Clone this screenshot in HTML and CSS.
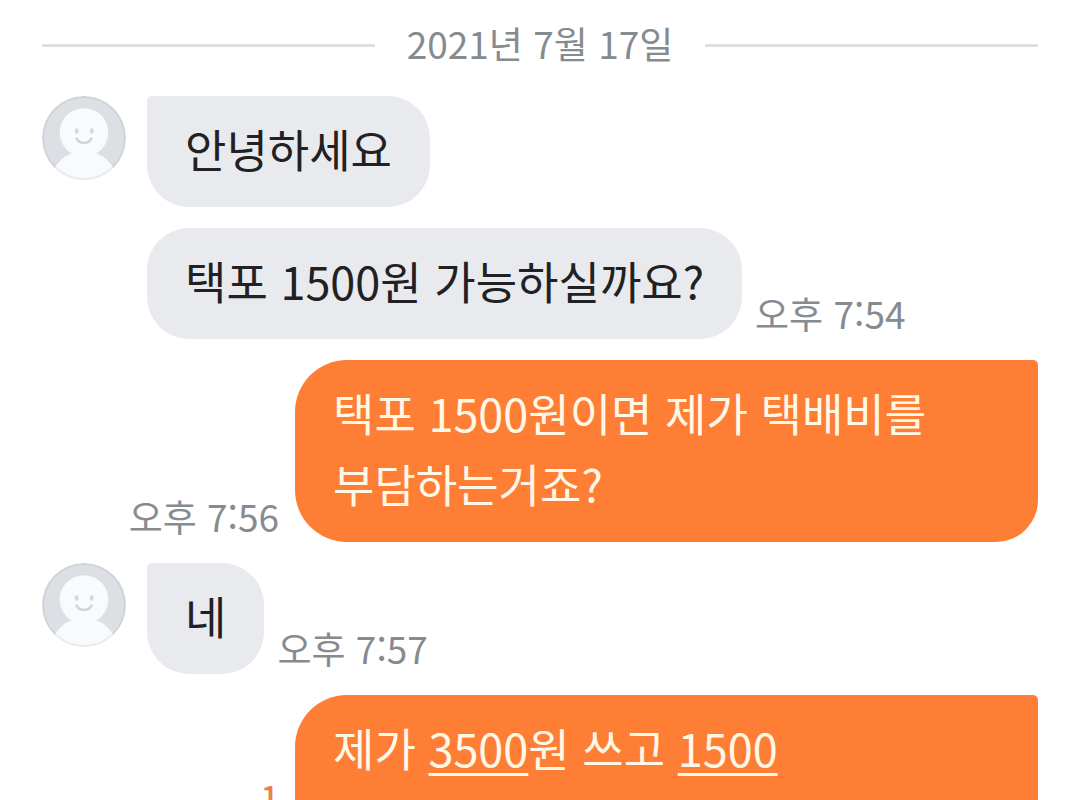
FILE: index.html
```html
<!DOCTYPE html>
<html lang="ko">
<head>
<meta charset="utf-8">
<meta name="viewport" content="width=device-width, initial-scale=1">
<title>채팅</title>
<link rel="stylesheet" href="styles.css">
</head>
<body>
<svg class="defs" aria-hidden="true">
  <defs>
    <clipPath id="avatar-clip"><circle cx="42" cy="42" r="42"/></clipPath>
    <symbol id="avatar" viewBox="0 0 84 84">
      <g clip-path="url(#avatar-clip)">
        <circle cx="42" cy="42" r="42" fill="#dce0e5"/>
        <circle cx="42" cy="89" r="34" fill="#f8fafc"/>
        <circle cx="42" cy="36.500" r="24.300" fill="#f8fafc"/>
      </g>
      <ellipse cx="34.700" cy="35" rx="2" ry="2.700" fill="#d3d6da"/>
      <ellipse cx="49.700" cy="35" rx="2" ry="2.700" fill="#d3d6da"/>
      <path d="M34.500 42.500c3 6 12 6 15 0" fill="none" stroke="#cfd2d6" stroke-width="2.500" stroke-linecap="round"/>
      <circle cx="42" cy="42" r="41" fill="none" stroke="#000" stroke-opacity=".06" stroke-width="2"/>
    </symbol>
  </defs>
</svg>
<main class="chat">
  <h1 class="date"><span class="date-text">2021년 7월 17일</span></h1>
  <section class="group received">
    <svg class="avatar" role="img" aria-label="프로필"><use href="#avatar"/></svg>
    <div class="messages">
      <div class="line"><p class="bubble first">안녕하세요</p></div>
      <div class="line"><p class="bubble">택포 1500원 가능하실까요?</p><time class="time">오후 7:54</time></div>
    </div>
  </section>
  <section class="line sent">
    <time class="time">오후 7:56</time>
    <p class="bubble">택포 1500원이면 제가 택배비를 부담하는거죠?</p>
  </section>
  <section class="group received">
    <svg class="avatar" role="img" aria-label="프로필"><use href="#avatar"/></svg>
    <div class="messages">
      <div class="line"><p class="bubble first">네</p><time class="time">오후 7:57</time></div>
    </div>
  </section>
  <section class="line sent">
    <span class="unread">1</span>
    <p class="bubble">제가 <a href="#">3500</a>원 쓰고 <a href="#">1500</a><br>&nbsp;</p>
  </section>
</main>
</body>
</html>
```
FILE: styles.css
```css
* { box-sizing: border-box; }
body {
  margin: 0;
  height: 100vh;
  overflow: hidden;
  background: #fff;
  font-family: "Noto Sans CJK KR", sans-serif;
}
.defs { position: absolute; width: 0; height: 0; }
.chat {
  display: flex;
  flex-direction: column;
  gap: 21px;
  padding: 16px 42px 0;
}
.date {
  display: flex;
  align-items: center;
  gap: 32px;
  margin: 0;
  font-size: 37px;
  font-weight: 400;
  line-height: 54px;
  color: #868b90;
}
.date-text { padding-bottom: 5px; }
.date::before, .date::after {
  content: "";
  flex: 1;
  height: 3px;
  background: #dedfe1;
}
.group { display: flex; gap: 21px; }
.avatar { width: 84px; height: 84px; flex: none; }
.messages { display: flex; flex-direction: column; gap: 21px; }
.line { display: flex; align-items: flex-end; gap: 13px; }
.bubble {
  margin: 0;
  padding: 17px 38px 23px;
  border-radius: 42px;
  background: #e9eaee;
  color: #212124;
  font-size: 45px;
  line-height: 71px;
  word-break: keep-all;
}
.first { border-top-left-radius: 5px; }
.sent { justify-content: flex-end; gap: 16px; }
.sent .bubble {
  flex: 0 1 743px;
  border-radius: 52px 5px 42px 52px;
  background: #ff7e36;
  color: #fff8e6;
}
.sent a { color: inherit; text-decoration-thickness: 3px; text-underline-offset: 6px; }
.time { font-size: 37px; line-height: 51px; color: #868b90; white-space: nowrap; }
.unread {
  padding-bottom: 61px;
  font-size: 32px;
  font-weight: 500;
  line-height: 40px;
  color: #e8814a;
}
```
